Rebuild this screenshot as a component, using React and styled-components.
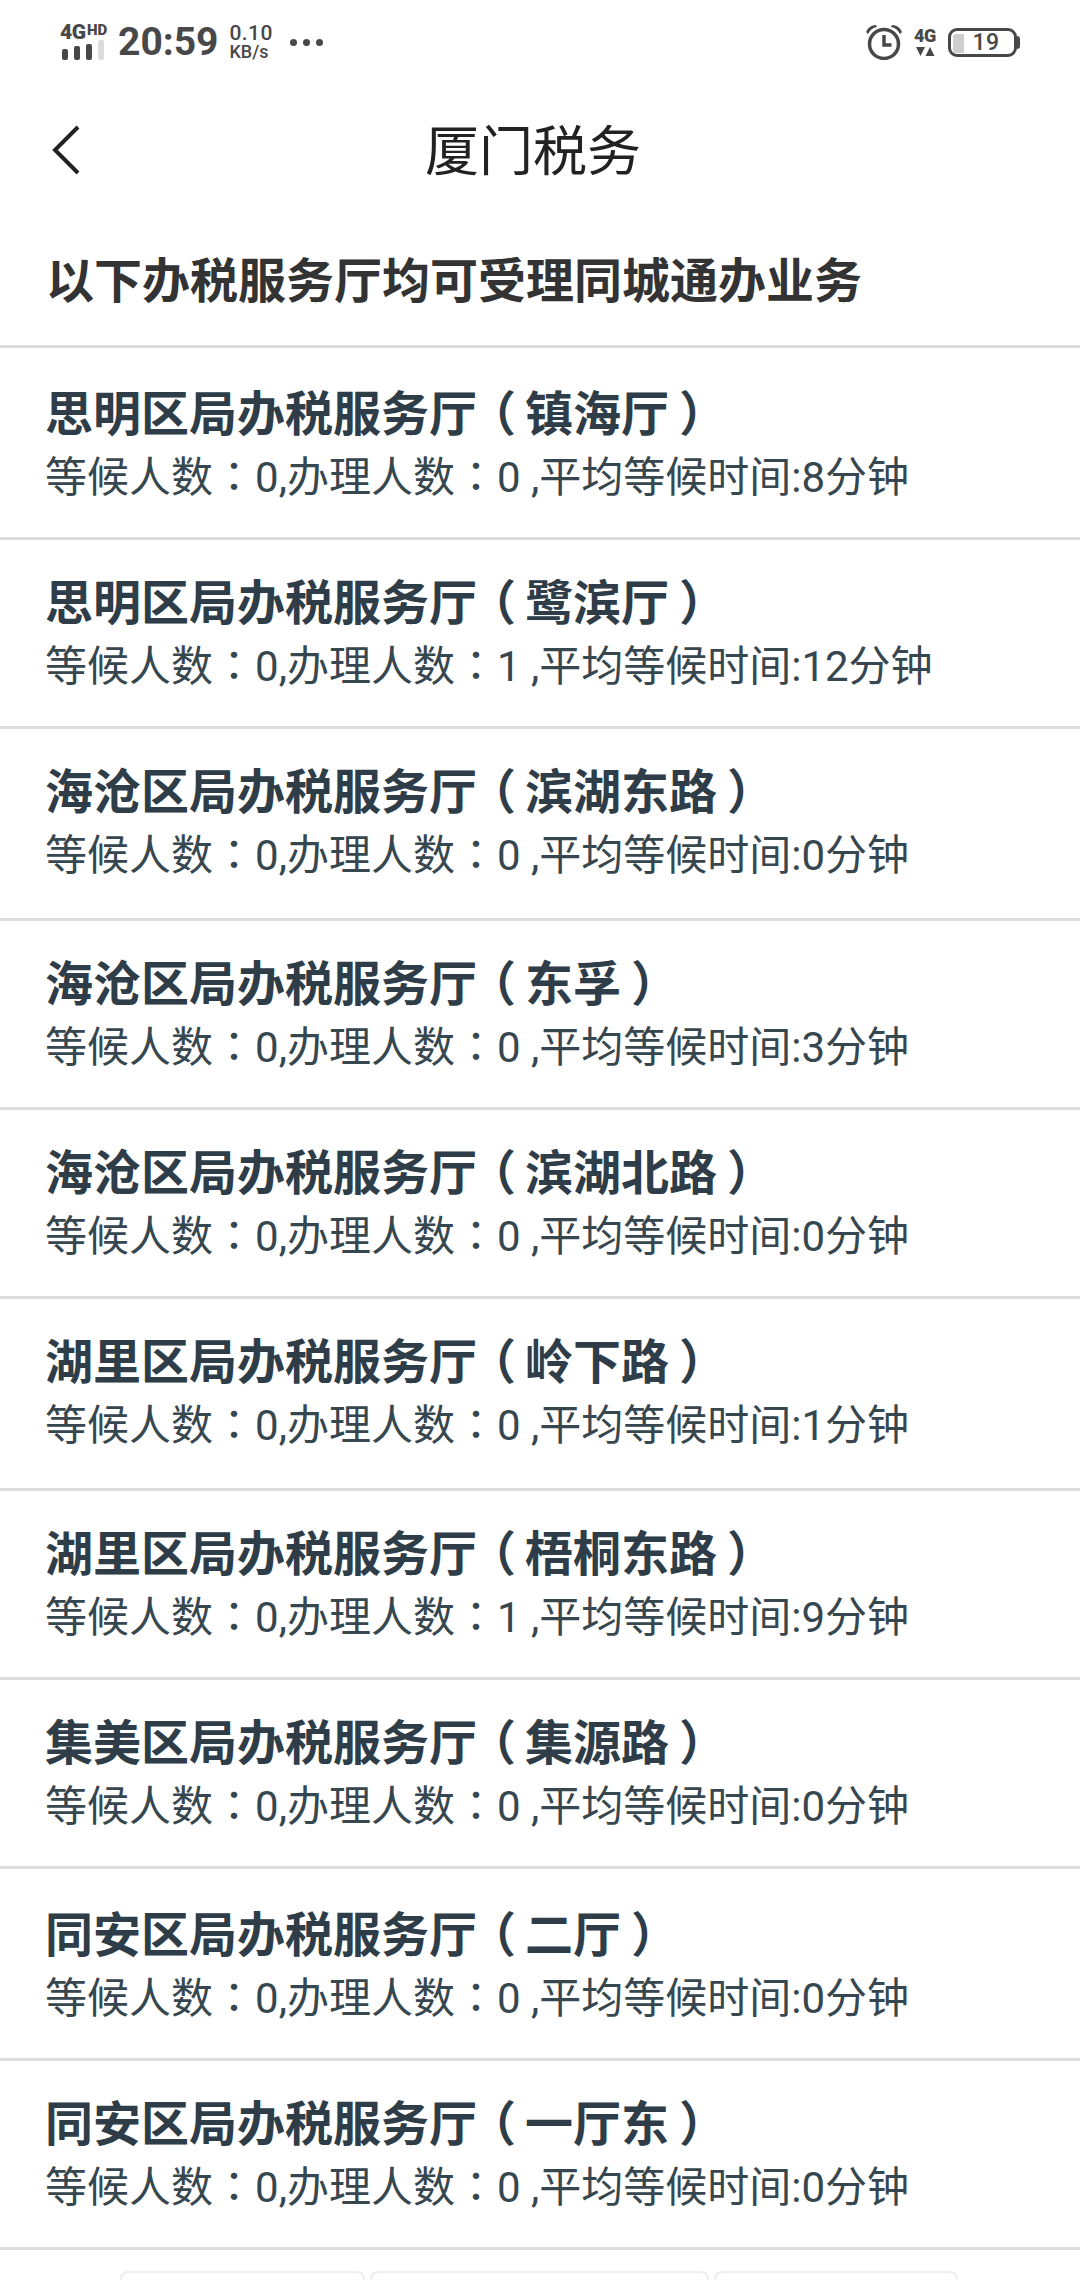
import React from 'react';
import styled, { createGlobalStyle } from 'styled-components';

const GlobalStyle = createGlobalStyle`
  html, body {
    margin: 0;
    padding: 0;
    background: #fff;
  }
  body {
    font-family: Roboto, "Noto Sans CJK SC", sans-serif;
  }
`;

// height and top differ a little per row in the original list
const halls = [
  { name: '思明区局办税服务厅', branch: '镇海厅', handling: 0, wait: 8, height: 192, top: 37 },
  { name: '思明区局办税服务厅', branch: '鹭滨厅', handling: 1, wait: 12, height: 189, top: 34 },
  { name: '海沧区局办税服务厅', branch: '滨湖东路', handling: 0, wait: 0, height: 192, top: 34 },
  { name: '海沧区局办税服务厅', branch: '东孚', handling: 0, wait: 3, height: 189, top: 34 },
  { name: '海沧区局办税服务厅', branch: '滨湖北路', handling: 0, wait: 0, height: 189, top: 34 },
  { name: '湖里区局办税服务厅', branch: '岭下路', handling: 0, wait: 1, height: 192, top: 34 },
  { name: '湖里区局办税服务厅', branch: '梧桐东路', handling: 1, wait: 9, height: 189, top: 34 },
  { name: '集美区局办税服务厅', branch: '集源路', handling: 0, wait: 0, height: 189, top: 34 },
  { name: '同安区局办税服务厅', branch: '二厅', handling: 0, wait: 0, height: 192, top: 37 },
  { name: '同安区局办税服务厅', branch: '一厅东', handling: 0, wait: 0, height: 189, top: 34 },
];

const Page = styled.div`
  width: 1080px;
  height: 2280px;
  overflow: hidden;
  display: flex;
  flex-direction: column;
`;

const StatusBar = styled.div`
  height: 88px;
  flex: none;
  box-sizing: border-box;
  display: flex;
  align-items: center;
  justify-content: space-between;
  padding: 0 63px 4px 60px;
  color: #484848;
`;

const StatusGroup = styled.div`
  display: flex;
  align-items: center;
`;

const SignalBox = styled.div`
  width: 47px;
  display: flex;
  flex-direction: column;
  margin-right: 11px;
`;

const SignalText = styled.div`
  display: flex;
  align-items: flex-start;
  height: 15px;
  font-size: 21px;
  line-height: 15px;
  font-weight: 900;
  letter-spacing: -0.3px;
  white-space: nowrap;
  span {
    font-size: 15px;
    line-height: 10px;
    letter-spacing: 0;
    margin-left: 1px;
  }
`;

const Bars = styled.div`
  display: flex;
  align-items: flex-end;
  gap: 6px;
  padding-left: 2px;
`;

const Bar = styled.i`
  display: block;
  width: 6px;
  border-radius: 2px;
  height: ${(p) => p.$h}px;
  background: ${(p) => (p.$off ? '#dcdcdc' : '#484848')};
`;

const Clock = styled.div`
  font-size: 39px;
  font-weight: 700;
  line-height: 44px;
`;

const Speed = styled.div`
  margin-left: 11px;
  display: flex;
  flex-direction: column;
  font-weight: 500;
  b {
    font-weight: 500;
    font-size: 21px;
    line-height: 20px;
    letter-spacing: 0.4px;
  }
  span {
    font-size: 18px;
    line-height: 18px;
  }
`;

const Dots = styled.div`
  display: flex;
  gap: 6px;
  margin-left: 17px;
  i {
    display: block;
    width: 7px;
    height: 7px;
    border-radius: 50%;
    background: #484848;
  }
`;

const Header = styled.div`
  height: 124px;
  flex: none;
  box-sizing: border-box;
  position: relative;
  display: flex;
  align-items: center;
  justify-content: center;
  padding: 5px 14px 0 0;
`;

const BackIcon = styled.svg`
  position: absolute;
  left: 50px;
  top: 36px;
`;

const HeaderTitle = styled.div`
  font-size: 54px;
  line-height: 64px;
  color: #222;
`;

const Notice = styled.div`
  height: 136px;
  flex: none;
  box-sizing: border-box;
  padding: 0 0 4px 46px;
  display: flex;
  align-items: center;
  font-size: 48px;
  font-weight: 700;
  color: #333;
  border-bottom: 3px solid #dcdcdc;
`;

const Row = styled.div`
  height: ${(p) => p.$height}px;
  flex: none;
  box-sizing: border-box;
  padding: ${(p) => p.$top}px 0 0 45px;
  border-bottom: 3px solid #dcdcdc;
`;

const RowTitle = styled.div`
  font-size: 48px;
  line-height: 60px;
  font-weight: 700;
  color: #2e3d48;
  white-space: nowrap;
`;

const RowInfo = styled.div`
  font-size: 42px;
  line-height: 58px;
  color: #37474f;
  white-space: nowrap;
`;

// centred colon, the SC face sets it off to one side
const Colon = styled.span`
  font-family: "Noto Sans CJK TC", sans-serif;
`;

// halt trims the bracket's blank half, the square is then padded by hand
const Bracket = styled.span`
  display: inline-block;
  box-sizing: border-box;
  width: 1em;
  font-feature-settings: "halt";
  text-align: ${(p) => (p.$close ? 'left' : 'right')};
  padding: ${(p) => (p.$close ? '0 0 0 10px' : '0 9px 0 0')};
`;

const Tabs = styled.div`
  display: flex;
  gap: 5px;
  padding: 21px 0 0 120px;
`;

const Tab = styled.div`
  width: ${(p) => p.$w}px;
  height: 40px;
  box-sizing: border-box;
  border: 2px solid #eee;
  border-radius: 8px 8px 0 0;
`;

const AlarmIcon = () => (
  <svg width="36" height="36" viewBox="0 0 36 36" style={{ marginRight: 10 }}>
    <circle cx="18" cy="20" r="14.5" fill="none" stroke="#484848" strokeWidth="3.5" />
    <path d="M18 11v10h7.5" fill="none" stroke="#484848" strokeWidth="3.5" />
    <path d="M0 8 Q3 1 10 1 L11 3 Q5 4 2 10Z M36 8 Q33 1 26 1 L25 3 Q31 4 34 10Z" fill="#484848" />
  </svg>
);

const NetIcon = styled.div`
  width: 26px;
  margin-right: 10px;
  display: flex;
  flex-direction: column;
  align-items: center;
  font-size: 18px;
  line-height: 15px;
  font-weight: 900;
  letter-spacing: -0.3px;
  svg {
    margin-top: 4px;
  }
`;

const Battery = styled.div`
  width: 69px;
  height: 29px;
  box-sizing: border-box;
  border: 3px solid #484848;
  border-radius: 9px;
  position: relative;
  display: flex;
  align-items: center;
  justify-content: center;
  padding-left: 7px;
  font-size: 23px;
  font-weight: 500;
  letter-spacing: 0.5px;
  &::before {
    content: '';
    position: absolute;
    left: 2px;
    top: 3px;
    bottom: 1px;
    width: 11px;
    border-radius: 3px 0 0 3px;
    background: #cecece;
  }
  &::after {
    content: '';
    position: absolute;
    right: -6px;
    top: 5px;
    width: 3px;
    height: 13px;
    border-radius: 0 3px 3px 0;
    background: #484848;
  }
`;

const Info = ({ handling, wait }) => (
  <RowInfo>
    等候人数<Colon>：</Colon>0,办理人数<Colon>：</Colon>{handling} ,平均等候时间:{wait}分钟
  </RowInfo>
);

export default function App() {
  return (
    <Page>
      <GlobalStyle />
      <StatusBar>
        <StatusGroup>
          <SignalBox>
            <SignalText>4G<span>HD</span></SignalText>
            <Bars>
              <Bar $h={11} />
              <Bar $h={14} />
              <Bar $h={16} />
              <Bar $h={20} $off />
            </Bars>
          </SignalBox>
          <Clock>20:59</Clock>
          <Speed>
            <b>0.10</b>
            <span>KB/s</span>
          </Speed>
          <Dots>
            <i />
            <i />
            <i />
          </Dots>
        </StatusGroup>
        <StatusGroup>
          <AlarmIcon />
          <NetIcon>
            4G
            <svg width="19" height="9" viewBox="0 0 19 9">
              <path d="M0 0h9L4.5 9z M9.5 9L14 0l4.5 9z" fill="#484848" />
            </svg>
          </NetIcon>
          <Battery>19</Battery>
        </StatusGroup>
      </StatusBar>
      <Header>
        <BackIcon width="34" height="52" viewBox="0 0 34 52">
          <path d="M28 3 L5 26 L28 49" fill="none" stroke="#222" strokeWidth="4" />
        </BackIcon>
        <HeaderTitle>厦门税务</HeaderTitle>
      </Header>
      <Notice>以下办税服务厅均可受理同城通办业务</Notice>
      {halls.map((hall) => (
        <Row key={hall.branch} $height={hall.height} $top={hall.top}>
          <RowTitle>
            {hall.name}<Bracket>（</Bracket>{hall.branch}<Bracket $close>）</Bracket>
          </RowTitle>
          <Info handling={hall.handling} wait={hall.wait} />
        </Row>
      ))}
      <Tabs>
        <Tab $w={245} />
        <Tab $w={339} />
        <Tab $w={244} />
      </Tabs>
    </Page>
  );
}
